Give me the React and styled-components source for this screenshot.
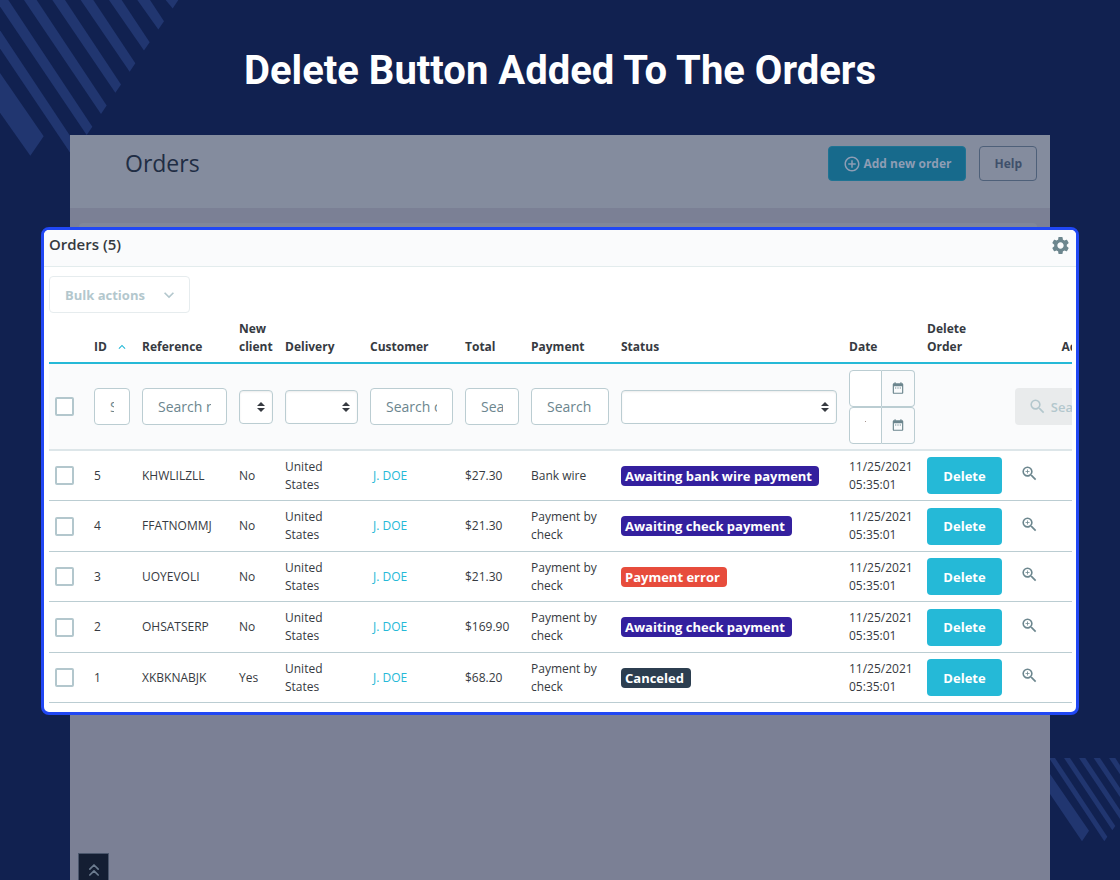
import React, {useState} from 'react';
import styled, {createGlobalStyle} from 'styled-components';
import {
    MdAddCircleOutline,
    MdDateRange,
    MdKeyboardArrowDown,
    MdKeyboardArrowUp,
    MdSearch,
    MdSettings,
    MdZoomIn,
} from 'react-icons/md';
import {ChevronsUp} from 'lucide-react';

const orders = [
    {id: 5, reference: 'KHWLILZLL', isNew: 'No', total: '$27.30', payment: 'Bank wire', status: 'Awaiting bank wire payment', color: '#34209e'},
    {id: 4, reference: 'FFATNOMMJ', isNew: 'No', total: '$21.30', payment: 'Payment by check', status: 'Awaiting check payment', color: '#34209e'},
    {id: 3, reference: 'UOYEVOLI', isNew: 'No', total: '$21.30', payment: 'Payment by check', status: 'Payment error', color: '#e74c3c'},
    {id: 2, reference: 'OHSATSERP', isNew: 'No', total: '$169.90', payment: 'Payment by check', status: 'Awaiting check payment', color: '#34209e'},
    {id: 1, reference: 'XKBKNABJK', isNew: 'Yes', total: '$68.20', payment: 'Payment by check', status: 'Canceled', color: '#2c3e50'},
];

// width of each column, the status column takes what is left
const columns = [39, 48, 97, 46, 85, 95, 66, 90, null, 78, 88, 103];

// thin stripes of the top left corner, from bottom to top
const stripes = [-1, 0, 1, 2, 3, 4, 5, 6].map(k => {
    const x = 43 * k;
    const y = -63.3 * k;
    return `${85 * k - 13},0 ${85 * k + 25},0 ${277 + x},${380 + y} ${260 + x},${405 + y}`;
});

const SelectFilter = ({label}) => (
    <SelectWrapper>
        <Select aria-label={label}>
            <option value="" />
        </Select>
        <svg width="8" height="10" viewBox="0 0 8 10" aria-hidden="true">
            <path d="M4 0 8 4H0zM4 10 0 6h8z" fill="#363a41" />
        </svg>
    </SelectWrapper>
);

const DateFilter = ({label, placeholder}) => (
    <DateGroup>
        <DateInput type="text" aria-label={label} placeholder={placeholder} />
        <DateAddon>
            <MdDateRange size={14} />
        </DateAddon>
    </DateGroup>
);

const OrderRow = ({order, checked, onToggle}) => (
    <Row>
        <Cell>
            <Checkbox type="checkbox" aria-label={'Select order ' + order.id} checked={checked} onChange={onToggle} />
        </Cell>
        <Cell>{order.id}</Cell>
        <Cell>{order.reference}</Cell>
        <Cell>{order.isNew}</Cell>
        <Cell>United States</Cell>
        <Cell>
            <CustomerLink href="#customer">J. DOE</CustomerLink>
        </Cell>
        <Cell>{order.total}</Cell>
        <Cell>{order.payment}</Cell>
        <Cell>
            <Badge $color={order.color}>{order.status}</Badge>
        </Cell>
        <Cell>11/25/2021 05:35:01</Cell>
        <Cell>
            <DeleteButton type="button">Delete</DeleteButton>
        </Cell>
        <Cell>
            <ViewLink href="#view" aria-label={'View order ' + order.id}>
                <MdZoomIn size={19} />
            </ViewLink>
        </Cell>
    </Row>
);

const App = () => {
    const [selected, setSelected] = useState([]);

    const toggle = id => {
        setSelected(selected.includes(id) ? selected.filter(item => item !== id) : [...selected, id]);
    };

    const toggleAll = () => {
        setSelected(selected.length === orders.length ? [] : orders.map(order => order.id));
    };

    return (
        <Page>
            <GlobalStyle />
            <TopStripes width="180" height="158" viewBox="0 0 540 474" aria-hidden="true">
                <polygon points="0,219 131,409 91,467 0,338" />
                {stripes.map(points => <polygon key={points} points={points} />)}
            </TopStripes>
            <BottomStripes width="70" height="84" viewBox="150 84 210 252" aria-hidden="true">
                <polygon points="150,132 267,302 246,334 150,192" />
                <polygon points="147,84 165,84 322,320 313,334" />
                <polygon points="192,84 210,84 346,288 337,301" />
                <polygon points="237,84 256,84 360,240 360,267" />
                <polygon points="281,84 300,84 360,174 360,201" />
                <polygon points="327,84 346,84 360,106 360,133" />
            </BottomStripes>

            <Heading>Delete Button Added To The Orders</Heading>

            <Backdrop>
                <PageHeader>
                    <PageTitle>Orders</PageTitle>
                    <AddButton type="button">
                        <MdAddCircleOutline size={18} />
                        Add new order
                    </AddButton>
                    <HelpButton type="button">Help</HelpButton>
                </PageHeader>
                <CardEdge />

                <Panel>
                    <PanelHeader>
                        <PanelTitle>Orders (5)</PanelTitle>
                        <IconButton type="button" aria-label="Settings">
                            <MdSettings size={21} />
                        </IconButton>
                    </PanelHeader>
                    <PanelBody>
                        <BulkButton type="button" disabled>
                            Bulk actions
                            <MdKeyboardArrowDown size={20} />
                        </BulkButton>
                        <Table>
                            <colgroup>
                                {columns.map((width, index) => <Column key={index} $width={width} />)}
                            </colgroup>
                            <thead>
                                <tr>
                                    <HeadCell />
                                    <HeadCell>
                                        <SortLabel>
                                            ID
                                            <MdKeyboardArrowUp size={14} />
                                        </SortLabel>
                                    </HeadCell>
                                    <HeadCell>Reference</HeadCell>
                                    <HeadCell>New client</HeadCell>
                                    <HeadCell>Delivery</HeadCell>
                                    <HeadCell>Customer</HeadCell>
                                    <HeadCell>Total</HeadCell>
                                    <HeadCell>Payment</HeadCell>
                                    <HeadCell>Status</HeadCell>
                                    <HeadCell>Date</HeadCell>
                                    <HeadCell>Delete Order</HeadCell>
                                    <HeadCell $right>Actions</HeadCell>
                                </tr>
                                <FilterRow>
                                    <Cell>
                                        <Checkbox
                                            type="checkbox"
                                            aria-label="Select all orders"
                                            checked={selected.length === orders.length}
                                            onChange={toggleAll}
                                        />
                                    </Cell>
                                    <Cell><Input type="text" aria-label="ID" placeholder="Search ID" /></Cell>
                                    <Cell><Input type="text" aria-label="Reference" placeholder="Search reference" /></Cell>
                                    <Cell><SelectFilter label="New client" /></Cell>
                                    <Cell><SelectFilter label="Delivery" /></Cell>
                                    <Cell><Input type="text" aria-label="Customer" placeholder="Search customer" /></Cell>
                                    <Cell><Input type="text" aria-label="Total" placeholder="Search total" /></Cell>
                                    <Cell><Input type="text" aria-label="Payment" placeholder="Search payment" /></Cell>
                                    <Cell><SelectFilter label="Status" /></Cell>
                                    <Cell>
                                        <DateFilter label="Date from" placeholder="" />
                                        <DateFilter label="Date to" placeholder="To" />
                                    </Cell>
                                    <Cell />
                                    <Cell>
                                        <SearchButton type="button" disabled>
                                            <MdSearch size={19} />
                                            Search
                                        </SearchButton>
                                    </Cell>
                                </FilterRow>
                            </thead>
                            <tbody>
                                {orders.map(order => (
                                    <OrderRow
                                        key={order.id}
                                        order={order}
                                        checked={selected.includes(order.id)}
                                        onToggle={() => toggle(order.id)}
                                    />
                                ))}
                            </tbody>
                        </Table>
                    </PanelBody>
                </Panel>

                <ScrollTop type="button" aria-label="Back to top">
                    <ChevronsUp size={20} strokeWidth={2} />
                </ScrollTop>
            </Backdrop>
        </Page>
    );
};

const GlobalStyle = createGlobalStyle`
* {
    box-sizing: border-box;
}
body {
    margin: 0;
    background: #112150;
    font-family: 'Open Sans', 'Noto Sans', sans-serif;
}
button, input, select {
    font-family: inherit;
    margin: 0;
}
svg {
    display: block;
    flex-shrink: 0;
}
`;

const Page = styled.main`
    position: relative;
    display: flex;
    flex-direction: column;
    min-height: 100vh;
    overflow: hidden;
`;

const Stripes = styled.svg`
    position: absolute;
    fill: #213670;
`;

const TopStripes = styled(Stripes)`
    top: 0;
    left: 0;
`;

const BottomStripes = styled(Stripes)`
    right: 0;
    bottom: 38px;
`;

const Heading = styled.h1`
    position: relative;
    margin: 0;
    padding: 43px 0 36px;
    color: #fff;
    font-family: Roboto, sans-serif;
    font-size: 40px;
    font-weight: 700;
    line-height: 56px;
    text-align: center;
`;

const Backdrop = styled.section`
    position: relative;
    flex: 1;
    display: flex;
    flex-direction: column;
    margin: 0 70px;
    background: #7b8095;
`;

const PageHeader = styled.header`
    display: flex;
    align-items: flex-start;
    gap: 13px;
    height: 73px;
    padding: 11px 13px 0 55px;
    background: #848c9e;
`;

const PageTitle = styled.h2`
    flex: 1;
    margin: 0;
    color: #1f2d44;
    font-size: 23px;
    font-weight: 400;
    line-height: 35px;
`;

const Button = styled.button`
    display: flex;
    align-items: center;
    justify-content: center;
    height: 37px;
    padding: 0 15px;
    border: 1px solid transparent;
    border-radius: 4px;
    font-size: 13px;
    font-weight: 600;
    cursor: pointer;
`;

const AddButton = styled(Button)`
    gap: 3px;
    height: 35px;
    padding: 0 14px;
    background: #176a8c;
    border-color: #1f7393;
    color: #8e9db4;
    font-size: 12px;
    font-weight: 700;
`;

const HelpButton = styled(Button)`
    height: 35px;
    padding: 0 14px;
    background: transparent;
    border-color: #4e6079;
    color: #3f506b;
    font-size: 12px;
    font-weight: 700;
`;

// top of the card that stays behind the panel
const CardEdge = styled.div`
    height: 4px;
    margin: 15px 13px 0 9px;
    border-radius: 4px 4px 0 0;
    background: #80879a;
`;

const Panel = styled.section`
    margin: 0 -29px;
    border: 3px solid #2047f4;
    border-radius: 8px;
    background: #fff;
    overflow: hidden;
`;

const PanelHeader = styled.header`
    display: flex;
    align-items: flex-start;
    justify-content: space-between;
    height: 37px;
    padding: 0 5px;
    border-bottom: 1px solid #e3eced;
    background: #fafbfc;
`;

const PanelTitle = styled.h3`
    margin: 0;
    color: #363a41;
    font-size: 15px;
    font-weight: 600;
    line-height: 28px;
`;

const IconButton = styled.button`
    padding: 5px 0 0;
    border: 0;
    background: none;
    color: #6c868e;
    cursor: pointer;
`;

const PanelBody = styled.div`
    margin: 9px 4px 9px 5px;
    overflow: hidden;
`;

const BulkButton = styled(Button)`
    gap: 14px;
    padding: 0 10px 0 15px;
    background: #fff;
    border-color: #e6ecee;
    color: #b3c7cd;
    font-weight: 700;
    cursor: default;

    svg {
        stroke: currentColor;
    }
`;

const Table = styled.table`
    width: calc(100% + 40px);
    min-width: 1063px;
    table-layout: fixed;
    border-collapse: separate;
    border-spacing: 0;
    color: #363a41;
    font-size: 12px;
    line-height: 18px;
`;

const Column = styled.col`
    width: ${props => props.$width ? props.$width + 'px' : 'auto'};
`;

const HeadCell = styled.th`
    padding: 7px 6px 6px;
    border-bottom: 2px solid #25b9d7;
    font-weight: 700;
    text-align: ${props => props.$right ? 'right' : 'left'};
    vertical-align: bottom;
`;

const SortLabel = styled.span`
    display: flex;
    align-items: center;
    gap: 8px;

    svg {
        color: #25b9d7;
        stroke: currentColor;
    }
`;

const Cell = styled.td`
    padding: 0 6px;
    border-bottom: 1px solid #bbcdd2;
    vertical-align: middle;
`;

const Row = styled.tr`
    height: 50px;

    &:nth-child(even) {
        height: 51px;
    }
`;

const FilterRow = styled.tr`
    height: 87px;
    background: #fafbfc;

    ${Cell} {
        border-bottom: 2px solid #dde6e9;
    }
`;

const Checkbox = styled.input`
    appearance: none;
    display: block;
    width: 19px;
    height: 19px;
    border: 2px solid #b3c7cd;
    border-radius: 2px;
    background: #fff;

    &:checked {
        background: #25b9d7;
    }
`;

const Input = styled.input`
    display: block;
    width: 100%;
    height: 37px;
    padding: 0 15px;
    border: 1px solid #bbcdd2;
    border-radius: 4px;
    background: #fff;
    color: #363a41;
    font-size: 14px;

    &::placeholder {
        color: #6c868e;
        opacity: 1;
    }
`;

const SelectWrapper = styled.div`
    position: relative;

    svg {
        position: absolute;
        top: 12px;
        right: 8px;
        pointer-events: none;
    }
`;

const Select = styled.select`
    appearance: none;
    display: block;
    width: 100%;
    height: 34px;
    padding: 0 15px 0 8px;
    border: 1px solid #bbcdd2;
    border-radius: 4px;
    background: #fff;
    box-shadow: inset 0 1px 2px rgba(0, 0, 0, 0.08);
    font-size: 13px;
`;

const DateGroup = styled.div`
    display: flex;
`;

const DateInput = styled(Input)`
    width: 33px;
    border-radius: 4px 0 0 4px;
`;

const DateAddon = styled.span`
    flex: 1;
    display: flex;
    align-items: center;
    justify-content: center;
    border: 1px solid #bbcdd2;
    border-left: 0;
    border-radius: 0 4px 4px 0;
    color: #6c868e;
`;

const SearchButton = styled(Button)`
    gap: 4px;
    width: 100%;
    background: #e9ebec;
    color: #b3c7cd;
    cursor: default;
`;

const CustomerLink = styled.a`
    padding-left: 3px;
    color: #25b9d7;
    text-decoration: none;
`;

const Badge = styled.span`
    display: inline-block;
    padding: 0 7px 0 4px;
    border-radius: 4px;
    background: ${props => props.$color};
    color: #fff;
    font-size: 13px;
    font-weight: 700;
    line-height: 20px;
    white-space: nowrap;
    vertical-align: middle;
`;

const DeleteButton = styled(Button)`
    width: 75px;
    background: #25b9d7;
    color: #fff;
    font-weight: 700;
`;

const ViewLink = styled.a`
    display: block;
    padding: 0 0 4px 5px;
    color: #6c868e;
`;

const ScrollTop = styled.button`
    display: flex;
    align-items: center;
    justify-content: center;
    width: 31px;
    height: 27px;
    margin: auto 0 0 8px;
    padding: 5px 0 0;
    border: 1px solid #4a566c;
    border-bottom: 0;
    background: #141e33;
    color: #6c7c90;
    cursor: pointer;
`;

export default App;
